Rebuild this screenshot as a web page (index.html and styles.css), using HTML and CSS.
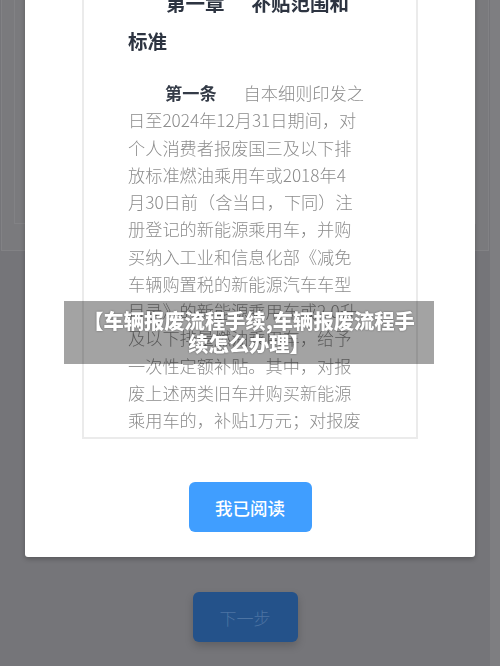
FILE: index.html
```html
<!DOCTYPE html>
<html lang="zh-CN">
<head>
<meta charset="utf-8">
<title>车辆报废流程手续</title>
<link rel="stylesheet" href="styles.css">
</head>
<body>
  <div class="screen">
    <main class="page">
      <section class="card">
        <div class="card-inner"></div>
      </section>
      <div class="page-actions">
        <button class="btn-next" type="button">下一步</button>
      </div>
    </main>
    <div class="scrollbar"></div>
  </div>

  <div class="modal">
    <div class="doc">
      <div class="doc-body">
        <h2 class="doc-title"><span class="lead">第一章</span>补贴范围和<br>标准</h2>
        <p class="doc-text"><span class="lead lead-text">第一条</span>自本细则印发之<br>日至2024年12月31日期间，对<br>个人消费者报废国三及以下排<br>放标准燃油乘用车或2018年4<br>月30日前（含当日，下同）注<br>册登记的新能源乘用车，并购<br>买纳入工业和信息化部《减免<br>车辆购置税的新能源汽车车型<br>目录》的新能源乘用车或2.0升<br>及以下排量燃油乘用车，给予<br>一次性定额补贴。其中，对报<br>废上述两类旧车并购买新能源<br>乘用车的，补贴1万元；对报废</p>
      </div>
    </div>
    <div class="modal-actions">
      <button class="btn-read" type="button">我已阅读</button>
    </div>
  </div>

  <div class="caption">【车辆报废流程手续,车辆报废流程手<br>续怎么办理】</div>
</body>
</html>
```

FILE: styles.css
```css
html, body {
  margin: 0;
  padding: 0;
  height: 100%;
  overflow: hidden;
}

body {
  background: #757579;
  font-family: "Noto Sans CJK SC", "Noto Sans", sans-serif;
}

.screen {
  display: flex;
  height: 666px;
}

.page {
  width: 490px;
  display: flex;
  flex-direction: column;
}

.scrollbar {
  width: 10px;
  background: #7e7e81;
}

.card {
  margin: -10px 0 0 1px;
  width: 488px;
  height: 261px;
  box-sizing: border-box;
  background: #7a7a7d;
  border: 1px solid #828285;
  padding: 0 12px 0 12px;
}

.card-inner {
  height: 233px;
  box-sizing: border-box;
  border: 1px solid #828285;
  border-top: none;
}

.page-actions {
  display: flex;
  justify-content: center;
  margin-top: 341px;
}

.btn-next {
  width: 105px;
  height: 50px;
  border: none;
  border-radius: 6px;
  background: #24528a;
  color: #4d74a3;
  font-family: inherit;
  font-size: 17px;
  font-weight: 300;
  box-shadow: 0 4px 8px rgba(0, 0, 0, 0.18);
  padding: 0;
}

.modal {
  position: fixed;
  left: 25px;
  top: -20px;
  width: 450px;
  box-sizing: border-box;
  background: #ffffff;
  border-radius: 3px;
  box-shadow: 0 2px 5px rgba(0, 0, 0, 0.25);
  padding: 0 57px 25px;
}

.doc {
  height: 459px;
  box-sizing: border-box;
  border: 2px solid #ebebeb;
  overflow: hidden;
  padding: 2px 0 0 44px;
}

.doc-title {
  margin: 0;
  font-size: 19.5px;
  line-height: 38px;
  font-weight: 700;
  color: #2d3441;
  text-indent: 38px;
  white-space: nowrap;
}

.lead {
  display: inline-block;
  text-indent: 0;
  margin-right: 27px;
}

.doc-text {
  margin: 19px 0 0;
  font-size: 17.2px;
  line-height: 27.25px;
  font-weight: 300;
  color: #8c8c8c;
  text-indent: 37px;
  white-space: nowrap;
}

.lead-text {
  font-weight: 700;
  color: #343b47;
}

.modal-actions {
  display: flex;
  justify-content: center;
  margin-top: 43px;
}

.btn-read {
  width: 123px;
  height: 50px;
  border: none;
  border-radius: 6px;
  background: #409eff;
  color: #ffffff;
  font-family: inherit;
  font-size: 17.5px;
  font-weight: 500;
  padding: 0;
}

.caption {
  position: fixed;
  left: 64px;
  top: 301px;
  width: 370px;
  height: 63px;
  box-sizing: border-box;
  padding-top: 8px;
  background: rgba(0, 0, 0, 0.36);
  color: #ffffff;
  font-size: 20.3px;
  font-weight: 900;
  line-height: 23px;
  text-align: center;
  white-space: nowrap;
  text-shadow: 0 0 2px rgba(0, 0, 0, 0.45);
}
```
